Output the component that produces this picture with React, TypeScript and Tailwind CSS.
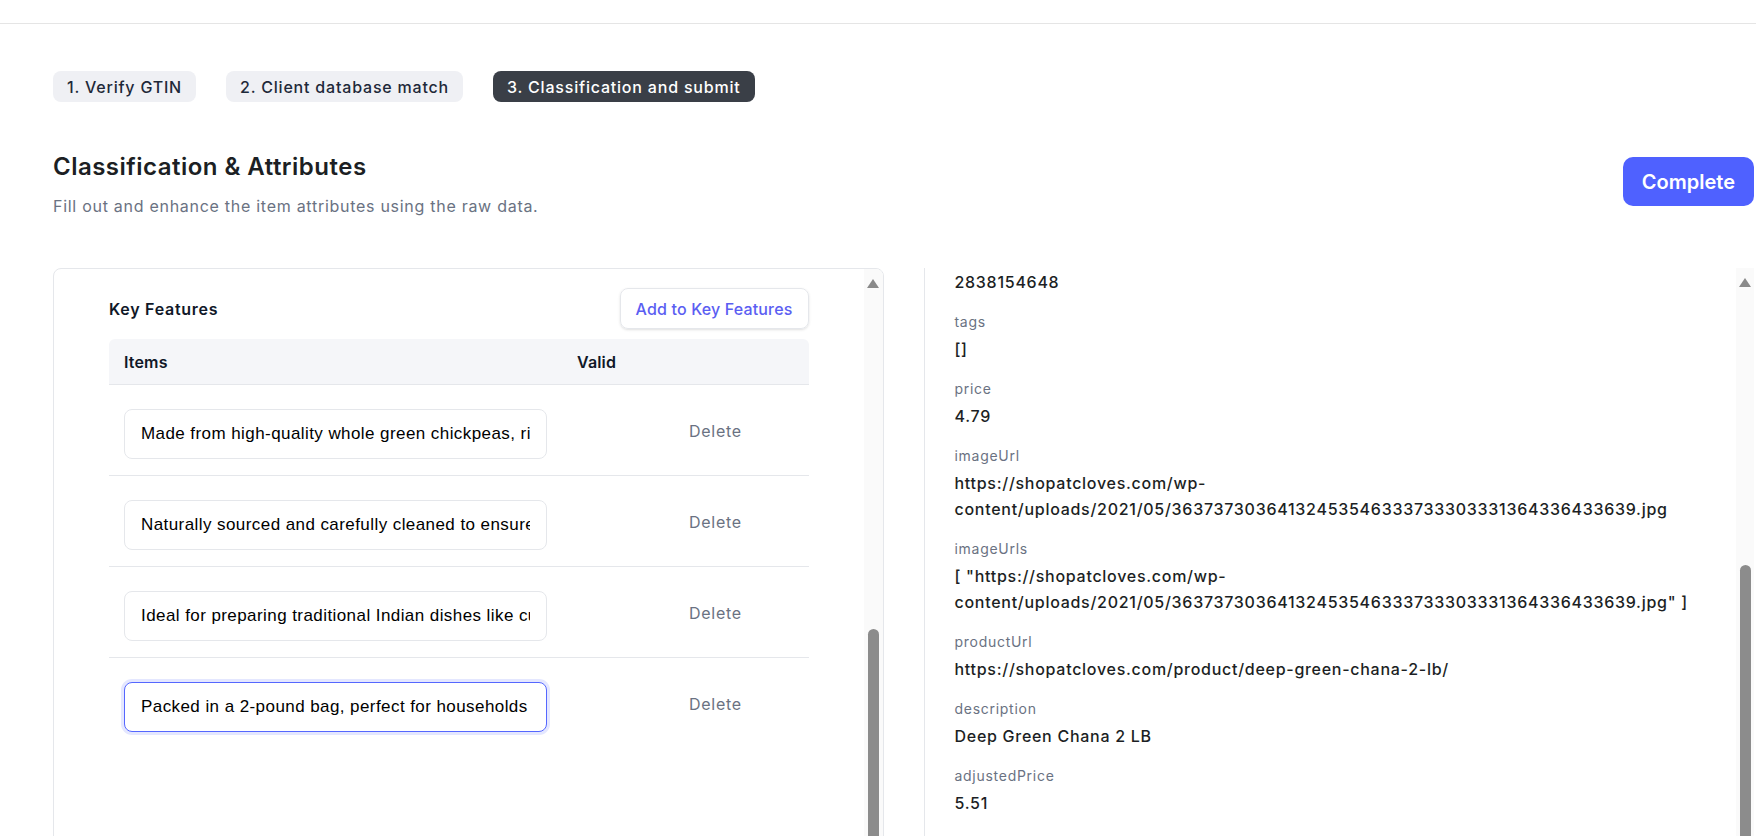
import { useState } from "react"

const steps = ["1. Verify GTIN", "2. Client database match", "3. Classification and submit"]

const features = [
  "Made from high-quality whole green chickpeas, rich in protein and fiber.",
  "Naturally sourced and carefully cleaned to ensure the best quality.",
  "Ideal for preparing traditional Indian dishes like curries and salads.",
  "Packed in a 2-pound bag, perfect for households that cook often.",
]

const fields = [
  { label: "", value: "2838154648" },
  { label: "tags", value: "[]" },
  { label: "price", value: "4.79" },
  {
    label: "imageUrl",
    value: "https://shopatcloves.com/wp-content/uploads/2021/05/36373730364132453546333733303331364336433639.jpg",
  },
  {
    label: "imageUrls",
    value: '[ "https://shopatcloves.com/wp-content/uploads/2021/05/36373730364132453546333733303331364336433639.jpg" ]',
  },
  { label: "productUrl", value: "https://shopatcloves.com/product/deep-green-chana-2-lb/" },
  { label: "description", value: "Deep Green Chana 2 LB" },
  { label: "adjustedPrice", value: "5.51" },
]

function Scrollbar({ thumbTop, width }: { thumbTop: string; width: string }) {
  return (
    <div className={`${width} shrink-0 bg-[#fafafa] flex flex-col items-center`}>
      <svg width="12" height="9" viewBox="0 0 12 9" className="mt-[10px]">
        <path d="M6 0 L12 9 L0 9 Z" fill="#8a8a8a" />
      </svg>
      <div className={`${thumbTop} w-[11px] flex-1 rounded-full bg-[#8c8c8c]`} />
    </div>
  )
}

export default function App() {
  const [items, setItems] = useState(features)

  return (
    <div className="h-screen overflow-hidden bg-white font-['Inter',sans-serif] text-gray-900 tracking-[0.045em]">
      <div className="h-[24px] border-b border-[#e5e5e5]" />

      <div className="pl-[53px] pr-[2px]">
        <div className="flex gap-[30px] pt-[47px]">
          {steps.map((s, i) => (
            <div
              key={s}
              className={`h-[31px] px-[14px] flex items-center rounded-lg text-base font-medium tracking-[0.05em] ${
                i === 2 ? "bg-[#3a3f47] text-white" : "bg-[#eff0f4] text-gray-800"
              }`}
            >
              {s}
            </div>
          ))}
        </div>

        <div className="flex justify-between items-start mt-[49px]">
          <div>
            <h1 className="text-2xl font-semibold leading-8 tracking-[0.02em] text-[#1c1f24]">
              Classification &amp; Attributes
            </h1>
            <p className="mt-[11px] text-base text-gray-500">
              Fill out and enhance the item attributes using the raw data.
            </p>
          </div>
          <button className="mt-[6px] h-[49px] px-[19px] rounded-[10px] bg-[#4f61ff] text-white text-xl font-semibold tracking-normal">
            Complete
          </button>
        </div>

        <div className="grid grid-cols-2 gap-10 mt-[50px]">
          <div className="h-[620px] border border-gray-200 rounded-lg flex overflow-hidden">
            <div className="flex-1 px-[55px] pt-[19px]">
              <div className="flex justify-between items-center">
                <h2 className="text-base font-semibold">Key Features</h2>
                <button className="h-[41px] px-[15px] rounded-lg border border-gray-200 shadow-sm text-base font-medium tracking-[0.01em] text-[#5b5ef2]">
                  Add to Key Features
                </button>
              </div>

              <div className="mt-[10px]">
                <div className="grid grid-cols-[453px_112px_1fr] h-[46px] items-center bg-[#f5f6f9] rounded-t-md border-b border-gray-200 text-base font-semibold tracking-[0.01em]">
                  <div className="px-[15px]">Items</div>
                  <div className="px-[15px]">Valid</div>
                  <div />
                </div>
                {items.map((it, i) => (
                  <div
                    key={i}
                    className={`grid grid-cols-[453px_112px_1fr] items-start pt-[24px] pb-[16px] ${
                      i < items.length - 1 ? "border-b border-gray-200" : ""
                    }`}
                  >
                    <div className="px-[15px]">
                      <input
                        value={it}
                        onChange={(e) => setItems(items.map((v, j) => (j === i ? e.target.value : v)))}
                        className={`w-full h-[50px] px-4 rounded-lg border bg-white text-[17px] tracking-[0.025em] text-black font-['Liberation_Sans',Arial,sans-serif] outline-none ${
                          i === 3 ? "border-[#5567ff] ring-[3px] ring-[#e4e7ff]" : "border-gray-200"
                        }`}
                      />
                    </div>
                    <div />
                    <div className="px-[15px] mt-[10px] text-base text-gray-500">Delete</div>
                  </div>
                ))}
              </div>
            </div>
            <Scrollbar thumbTop="mt-[341px]" width="w-[19px]" />
          </div>

          <div className="h-[620px] border-l border-gray-200 flex overflow-hidden">
            <div className="flex-1 pl-[30px] pr-4 pt-[1px] flex flex-col gap-[17px]">
              {fields.map((f, i) => (
                <div key={i}>
                  {f.label && <div className="text-sm leading-5 text-gray-500 mb-1">{f.label}</div>}
                  <div className="text-base font-medium leading-[26px] text-[#1c1f24]">{f.value}</div>
                </div>
              ))}
            </div>
            <Scrollbar thumbTop="mt-[278px]" width="w-[18px]" />
          </div>
        </div>
      </div>
    </div>
  )
}
